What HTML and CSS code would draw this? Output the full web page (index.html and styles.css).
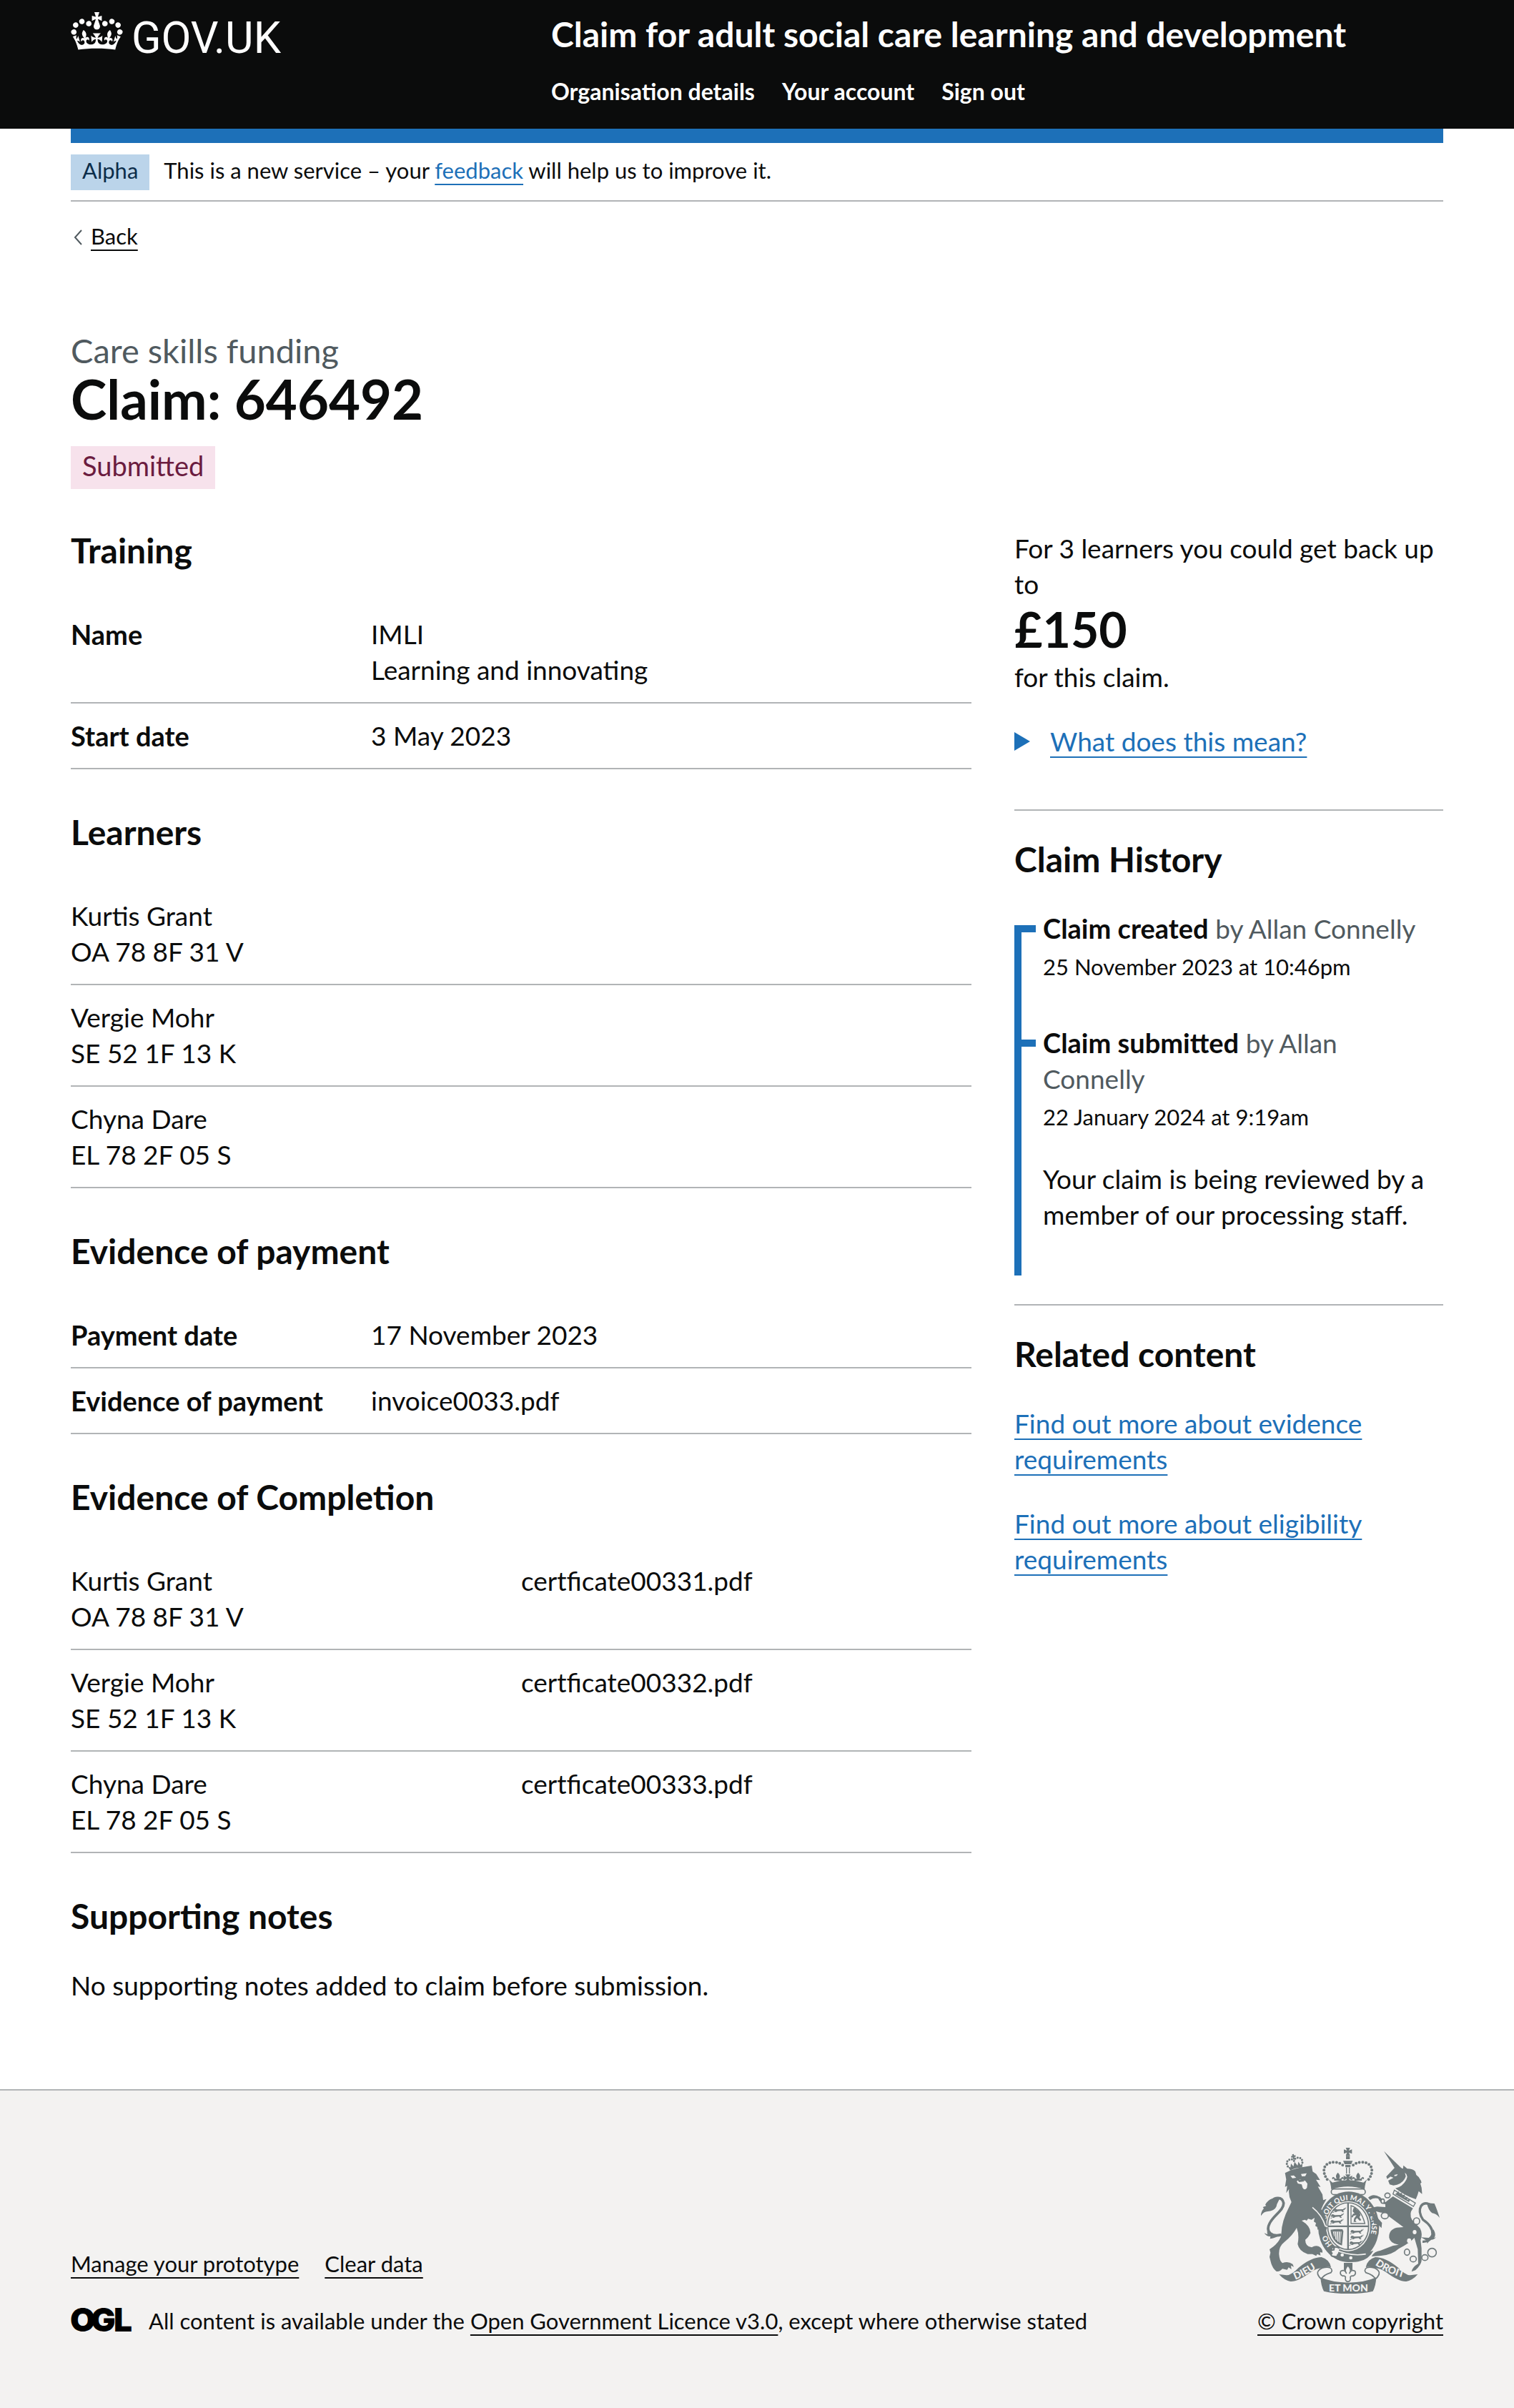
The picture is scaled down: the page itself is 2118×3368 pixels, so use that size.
FILE: index.html
```html
<!DOCTYPE html>
<html lang="en">
<head>
<meta charset="utf-8">
<meta name="viewport" content="width=device-width, initial-scale=1">
<title>Claim: 646492 – Claim for adult social care learning and development</title>
<link rel="stylesheet" href="styles.css">
</head>
<body>
<header class="header">
  <div class="container header-inner">
    <a class="logo" href="#">
      <svg class="logo-crown" viewBox="0 0 132 97" aria-hidden="true"><path fill="currentColor" fill-rule="evenodd" d="M25 30.2c3.5 1.5 7.7-.2 9.1-3.7 1.5-3.6-.2-7.8-3.9-9.2-3.6-1.4-7.6.3-9.1 3.9-1.4 3.5.3 7.5 3.9 9zM9 39.5c3.6 1.5 7.8-.2 9.2-3.7 1.5-3.6-.2-7.8-3.9-9.1-3.6-1.5-7.6.2-9.1 3.8-1.4 3.5.3 7.5 3.8 9zM4.4 57.2c3.5 1.5 7.7-.2 9.1-3.8 1.5-3.6-.2-7.7-3.9-9.1-3.5-1.5-7.6.3-9.1 3.8-1.4 3.5.3 7.6 3.9 9.1zm38.3-21.4c3.5 1.5 7.7-.2 9.1-3.8 1.5-3.6-.2-7.7-3.9-9.1-3.6-1.5-7.6.3-9.1 3.8-1.3 3.6.4 7.7 3.9 9.1zm64.4-5.6c-3.6 1.5-7.8-.2-9.1-3.7-1.5-3.6.2-7.8 3.8-9.2 3.6-1.4 7.7.3 9.2 3.9 1.3 3.5-.4 7.5-3.9 9zm15.9 9.3c-3.6 1.5-7.7-.2-9.1-3.7-1.5-3.6.2-7.8 3.7-9.1 3.6-1.5 7.7.2 9.2 3.8 1.5 3.5-.3 7.5-3.8 9zm4.7 17.7c-3.6 1.5-7.8-.2-9.2-3.8-1.5-3.6.2-7.7 3.9-9.1 3.6-1.5 7.7.3 9.2 3.8 1.3 3.5-.4 7.6-3.9 9.1zM89.3 35.8c-3.6 1.5-7.8-.2-9.2-3.8-1.4-3.6.2-7.7 3.9-9.1 3.6-1.5 7.7.3 9.2 3.8 1.4 3.6-.3 7.7-3.9 9.1zM69.7 17.7l8.9 4.7V9.3l-8.9 2.8c-.2-.3-.5-.6-.9-.9L72.4 0H59.6l3.5 11.2c-.3.3-.6.5-.9.9l-8.8-2.8v13.1l8.8-4.7c.3.3.6.7.9.9l-5 15.4v.1c-.2.8-.4 1.6-.4 2.4 0 4.1 3.1 7.5 7 8.1h.2c.3 0 .7.1 1 .1.4 0 .7 0 1-.1h.2c4-.6 7.1-4.1 7.1-8.1 0-.8-.1-1.7-.4-2.4V34l-5.1-15.4c.4-.2.7-.6 1-.9zM66 92.8c16.9 0 32.8 1.1 47.1 3.2 4-16.9 8.9-26.7 14-33.5l-9.6-3.4c1 4.9 1.1 7.2 0 10.2-1.5-1.4-3-4.3-4.2-8.7L108.6 76c2.8-2 5-3.2 7.5-3.3-4.4 9.4-10 11.9-13.6 11.2-4.3-.8-6.3-4.6-5.6-7.9 1-4.7 5.7-5.9 8-.5 4.3-8.7-3-11.4-7.6-8.8 7.1-7.2 7.9-13.5 2.1-21.1-8 6.1-8.1 12.3-4.5 20.8-4.7-5.4-12.1-2.5-9.5 6.2 3.4-5.2 7.9-2 7.2 3.1-.6 4.3-6.4 7.8-13.5 7.2-10.3-.9-10.9-8-11.2-13.8 2.5-.5 7.1 1.8 11 7.3L80.2 60c-4.1 4.4-8 5.3-12.3 5.4 1.4-4.4 8-11.6 8-11.6H55.5s6.4 7.2 7.9 11.6c-4.2-.1-8-1-12.3-5.4l1.4 16.4c3.9-5.5 8.5-7.7 10.9-7.3-.3 5.8-.9 12.8-11.1 13.8-7.2.6-12.9-2.9-13.5-7.2-.7-5 3.8-8.3 7.1-3.1 2.7-8.7-4.6-11.6-9.4-6.2 3.7-8.5 3.6-14.7-4.6-20.8-5.8 7.6-5 13.9 2.2 21.1-4.7-2.6-11.9.1-7.7 8.8 2.3-5.5 7.1-4.2 8.1.5.7 3.3-1.3 7.1-5.7 7.9-3.5.7-9-1.8-13.5-11.2 2.5.1 4.7 1.3 7.5 3.3l-4.7-15.4c-1.2 4.4-2.7 7.2-4.3 8.7-1.1-3-.9-5.3 0-10.2l-9.5 3.4c5 6.9 9.9 16.7 14 33.5 14.8-2.1 30.8-3.2 47.7-3.2z"/></svg>
      <span class="logo-text">GOV.UK</span>
    </a>
    <div class="header-content">
      <a class="service-name" href="#">Claim for adult social care learning and development</a>
      <nav class="header-nav" aria-label="Menu">
        <a href="#">Organisation details</a>
        <a href="#">Your account</a>
        <a href="#">Sign out</a>
      </nav>
    </div>
  </div>
</header>

<div class="container">
  <div class="phase-banner">
    <strong class="tag tag-phase">Alpha</strong>
    <span class="phase-text">This is a new service – your <a class="link" href="#">feedback</a> will help us to improve it.</span>
  </div>
  <a class="back" href="#">
    <svg class="back-arrow" viewBox="0 0 12 22" aria-hidden="true"><path d="M11 1 2 11l9 10" fill="none" stroke="#505a5f" stroke-width="2"/></svg>
    <span class="back-text">Back</span>
  </a>

  <main>
    <span class="caption">Care skills funding</span>
    <h1>Claim: 646492</h1>
    <strong class="tag tag-status">Submitted</strong>

    <div class="columns">
      <div class="details-column">
        <h2>Training</h2>
        <dl class="summary">
          <div class="summary-row"><dt>Name</dt><dd>IMLI<br>Learning and innovating</dd></div>
          <div class="summary-row"><dt>Start date</dt><dd>3 May 2023</dd></div>
        </dl>

        <h2 id="learners">Learners</h2>
        <table class="table" aria-labelledby="learners">
          <tbody>
            <tr><td>Kurtis Grant<br>OA 78 8F 31 V</td></tr>
            <tr><td>Vergie Mohr<br>SE 52 1F 13 K</td></tr>
            <tr><td>Chyna Dare<br>EL 78 2F 05 S</td></tr>
          </tbody>
        </table>

        <h2>Evidence of payment</h2>
        <dl class="summary">
          <div class="summary-row"><dt>Payment date</dt><dd>17 November 2023</dd></div>
          <div class="summary-row"><dt>Evidence of payment</dt><dd>invoice0033.pdf</dd></div>
        </dl>

        <h2 id="completion">Evidence of Completion</h2>
        <table class="table" aria-labelledby="completion">
          <tbody>
            <tr><td>Kurtis Grant<br>OA 78 8F 31 V</td><td>certficate00331.pdf</td></tr>
            <tr><td>Vergie Mohr<br>SE 52 1F 13 K</td><td>certficate00332.pdf</td></tr>
            <tr><td>Chyna Dare<br>EL 78 2F 05 S</td><td>certficate00333.pdf</td></tr>
          </tbody>
        </table>

        <h2>Supporting notes</h2>
        <p>No supporting notes added to claim before submission.</p>
      </div>

      <aside class="side-column">
        <p class="amount-text">For 3 learners you could get back up to <strong class="amount">£150</strong> for this claim.</p>
        <details class="help">
          <summary><span class="link">What does this mean?</span></summary>
        </details>
        <section class="side-section">
          <h2>Claim History</h2>
          <ol class="timeline">
            <li>
              <p><strong>Claim created</strong> <span class="byline">by Allan Connelly</span></p>
              <p class="timeline-date">25 November 2023 at 10:46pm</p>
            </li>
            <li>
              <p><strong>Claim submitted</strong> <span class="byline">by Allan Connelly</span></p>
              <p class="timeline-date">22 January 2024 at 9:19am</p>
              <p class="timeline-note">Your claim is being reviewed by a member of our processing staff.</p>
            </li>
          </ol>
        </section>
        <section class="side-section">
          <h2>Related content</h2>
          <ul class="related">
            <li><a class="link" href="#">Find out more about evidence requirements</a></li>
            <li><a class="link" href="#">Find out more about eligibility requirements</a></li>
          </ul>
        </section>
      </aside>
    </div>
  </main>
</div>

<footer class="footer">
  <div class="container footer-inner">
    <div>
      <nav class="footer-links" aria-label="Support links">
        <a href="#">Manage your prototype</a>
        <a href="#">Clear data</a>
      </nav>
      <div class="licence">
        <svg class="ogl" viewBox="0 0 83 34" role="img" aria-label="Open Government Licence"><text y="33"><tspan x="-1">O</tspan><tspan x="28">G</tspan><tspan x="60">L</tspan></text></svg>
        <span>All content is available under the <a href="#">Open Government Licence v3.0</a>, except where otherwise stated</span>
      </div>
    </div>
    <a class="copyright" href="#">
      <svg class="crest" viewBox="72 72 750 612" aria-hidden="true">
        <defs>
          <path id="garter" d="M371 479A97 110 0 1 1 500 488"/>
          <path id="motto-left" d="M216 626Q270 606 326 562"/>
          <path id="motto-right" d="M551 563Q600 600 680 620"/>
          <g id="small-lion"><path d="M2 12q3-10 10-6l6 3 22-1q8 0 8-7 5 4 1 10l-6 3 5 6h-7l-5-5-15 1-7 4-7-1 4-5-7 3z"/><path d="M46 9q10-2 9-8M6 20l-6 2" fill="none" stroke="#707a7c" stroke-width="3"/></g>
          <g id="fleur"><path d="M0-20q-14 14-5 26h-6q-9-14-14-2 3 8 7 1 4 2 2 9H16q-2-7 2-9 4 7 7-1-5-12-14 2H5q9-12-5-26z"/></g>
        </defs>
        <g fill="#707a7c">
          <!-- imperial crown -->
          <path d="M428 72h18l-5 12 13-5v18l-13-5 5 13h-18l5-13-13 5V79l13 5zM429 106h16v14h-16zM417 127h40l-6 14h-28zM426 144h22v10h-22z"/>
          <path d="M431 155v26M443 155v26" stroke="#707a7c" stroke-width="4"/>
          <g fill="none" stroke="#707a7c" stroke-width="12" stroke-linecap="round" stroke-dasharray="0 14"><path d="M350 205C325 170 335 133 378 133C400 133 412 140 420 150"/><path d="M524 205C549 170 539 133 496 133C474 133 462 140 454 150"/></g>
          <use href="#fleur" x="395" y="196"/><use href="#fleur" x="480" y="196"/>
          <path d="M426 184h22l-7 12 14-7v20l-14-7 7 14h-22l7-14-14 7v-20l14 7z"/>
          <path d="M356 204l16 14q65-20 130 0l16-14q-9 14-11 43-70-24-140 0-2-29-11-43z"/>
          <rect x="367" y="245" width="143" height="24" rx="12" fill="#f3f2f1" stroke="#707a7c" stroke-width="5"/>
          <!-- garter and shield -->
          <ellipse cx="440" cy="404" rx="128" ry="148"/>
          <ellipse cx="438" cy="401" rx="93" ry="105" fill="#f3f2f1"/>
          <ellipse cx="438" cy="401" rx="86" ry="98" fill="none" stroke="#707a7c" stroke-width="5"/>
          <path d="M434 303h7v196h-7zM352 398h172v7H352z"/>
          <use href="#small-lion" x="373" y="322"/><use href="#small-lion" x="364" y="346"/><use href="#small-lion" x="362" y="370"/>
          <use href="#small-lion" x="446" y="412"/><use href="#small-lion" x="446" y="436"/><use href="#small-lion" x="442" y="460"/>
          <path d="M450 390v-75q42 12 58 75z" fill="none" stroke="#707a7c" stroke-width="4"/>
          <path d="M460 326l8-5 4 9 12 8 6 17-5 8 8 12-6 4-12-12-7 9 5 7h-12l2-14 10-14-12 2-5 8-5-4 8-12 6-1-8-9z"/>
          <path d="M364 416q22-4 50-2l4 8-6 60q-42-12-48-66zm10 8q6 38 32 48l4-48z" fill-rule="evenodd"/>
          <path d="M381 425l2 28M389 424l2 38M397 424l2 44M405 423v46" stroke="#707a7c" stroke-width="3"/>
          <g class="crest-text crest-garter"><text><textPath href="#garter">HO</textPath></text><text><textPath href="#garter" startOffset="114">SOIT QUI MAL Y PENSE</textPath></text></g>
          <path d="M372 500q75 40 172 3-18 38-64 47-62 8-106-25z"/>
          <path d="M372 496q75 34 140 22" fill="none" stroke="#f3f2f1" stroke-width="5"/>
          <circle cx="413" cy="522" r="7" fill="#f3f2f1"/><circle cx="449" cy="534" r="7" fill="#f3f2f1"/>
          <path d="M402 494q-24-14-24 6-20 2-8 14-10 14 10 14 14 4 14-10" fill="#f3f2f1" stroke="#707a7c" stroke-width="6"/>
          <!-- lion -->
          <path d="M173 178L200 165 235 155 285 147 289 172 304 182 320 208 303 206 322 236 311 235 330 268 333 292 347 287 333 312 325 330 340 352 350 408 342 424 333 416 326 422 320 412 310 416 308 404 300 400 303 388 294 382 297 366 284 374 270 370 264 378 256 374 243 378Q280 400 280 430 270 450 258 458 258 486 285 490 300 480 315 486 332 496 330 512L320 510 322 524 308 518 304 526 288 518 268 518Q232 506 226 476 234 440 222 408 205 440 170 468 146 486 148 520 150 548 162 556 185 546 205 560L210 572 198 566 200 582 188 574 182 584 162 580Q150 594 136 590 118 576 112 546L108 530 112 512 108 498 122 488Q145 472 156 445 158 430 160 405 164 380 176 350L200 300Q186 272 190 245L178 262 182 232 173 236 178 205Z"/>
          <path d="M196 190l14-2 10 10-16 2zM240 182l24-3-6 12-14 1zM222 212l14-7 22 6 9 12-2 17q-10 14-18 0l-4-14-16-4z" fill="#f3f2f1"/>
          <path d="M226 208l22-5 6 10-22 3z"/>
          <path d="M288 322q40 32 54 78l10 4" fill="none" stroke="#f3f2f1" stroke-width="5"/>
          <path d="M158 437C118 448 90 425 108 390 124 355 168 335 167 304 162 276 128 276 112 302" fill="none" stroke="#707a7c" stroke-width="11"/>
          <path d="M152 283q-44-6-62 28l4 5-14 5 4 6q-10 8-13 32 12-20 30-20 36-4 38-30zM100 415q-4 12 0 21l-14-6q10 16 26 14l-2 10q26-2 46-22l-22 4q-32-2-34-21z"/>
          <g transform="rotate(-13 215 140)"><path d="M183 143q-6-22 14-26 12-2 17 10 6-12 18-10 20 4 14 26" fill="none" stroke="#707a7c" stroke-width="9" stroke-linecap="round" stroke-dasharray="0 11"/><path d="M212 98h7v6h6v7h-6v10h-7v-10h-6v-7h6zM184 144l9 6 6-16 7 15 9-18 9 18 7-15 6 16 9-6-5 18q-26-7-52 0z"/></g>
          <!-- unicorn -->
          <path d="M588 86l76 74-24 8z"/>
          <path d="M668 160l2-14 16 14q24 0 34 12l4 14q16 10 22 32l-5 4q8 20 7 44l-14-12q-4 16-12 34-44-14-86-46 30-6 46-36 10-18-6-30l4 16q-12 34-52 38l-16-4-6-16 22-12-12-5-14 10-4-10 40-42z"/>
          <path d="M632 186l14-3-4 7-10 1z" fill="#f3f2f1"/>
          <path d="M632 250l88 54-8 14-86-52z" fill="#f3f2f1" stroke="#707a7c" stroke-width="4"/>
          <path d="M642 262l8-8 2 12 12-6-1 13 13-5-2 14 13-4-2 12 14-3-6 13-58-33z"/>
          <path d="M626 276l84 50q-18 22-4 48l34 36q12 24 2 50l4 34v52q-2 18-26 40l-16 6q2-18 28-34l-2-60-14-48q-20 22-66 46-28 26-74 29l-40 3q12-22 38-25l52-20 24-4q-36-6-40-30-2-34 32-42l28-2-62-46-8-14q-24 2-44-6-12 4-10 10l34 38-2 22-14-14-18-6-2-20-18-30q8-18 34-20l34 2v-12q-20-2-30-24-18-4-34 6l-8-10q20-20 50-2l22 22z"/>
          <path d="M750 466q34 2 42-30 2-34-40-62-22-34-8-58 18-22 48 2" fill="none" stroke="#707a7c" stroke-width="10"/>
          <path d="M768 304l32 2q10 22 22 60-14-18-32-20-16-12-22-42zM796 414q14 26 2 36l8-2q-8 12-24 10l-12 16-2-12-24-14 32 2q16-12 20-36z"/>
          <g fill="#f3f2f1" stroke="#707a7c" stroke-width="5"><ellipse cx="603" cy="272" rx="11" ry="10"/><ellipse cx="592" cy="357" rx="15" ry="13"/><ellipse cx="583" cy="296" rx="7" ry="9"/><ellipse cx="725" cy="380" rx="13" ry="14"/><ellipse cx="685" cy="510" rx="11" ry="13"/><ellipse cx="711" cy="539" rx="13" ry="12"/><ellipse cx="760" cy="533" rx="13" ry="12"/><circle cx="790" cy="512" r="18"/></g>
          <ellipse cx="717" cy="426" rx="8" ry="9" fill="#f3f2f1"/><ellipse cx="694" cy="462" rx="9" ry="10" fill="#f3f2f1"/>
          <!-- ribbon -->
          <path d="M148 603l32 4q22-2 50-32 54-44 96-44 34 10 40 42-20-4-34 4-24-2-52 18-54 40-84 38-28-6-48-30z"/>
          <path d="M730 603l-32 4q-22-2-50-32-54-44-96-44-34 10-40 42 20-4 34 4 24-2 52 18 54 40 84 38 28-6 48-30z"/>
          <path d="M340 574q28-4 30 14l-4 8q-34 10-40 28-18-16-16-30 6-16 30-20zM538 574q-28-4-30 14l4 8q34 10 40 28 18-16 16-30-6-16-30-20z" fill="#f3f2f1" stroke="#707a7c" stroke-width="5"/>
          <path d="M322 616q50 22 117 22t117-22q-2 36-14 58-40 10-103 10t-103-10q-12-22-14-58z"/>
          <path d="M420 555h36v30h-36z"/>
          <path d="M437 566q-18 18-6 34-8-20-24-10-6 14 8 20 8-2 12 4-4 18 10 20 14-2 10-20 4-6 12-4 14-6 8-20-16-10-24 10 12-16-6-34z" fill="#f3f2f1" stroke="#707a7c" stroke-width="5"/>
          <g class="crest-text"><text><textPath href="#motto-left">DIEU</textPath></text><text><textPath href="#motto-right">DROIT</textPath></text><text x="439" y="675" text-anchor="middle">ET MON</text></g>
        </g>
      </svg>
      <span class="copyright-text">© Crown copyright</span>
    </a>
  </div>
</footer>
</body>
</html>
```
FILE: styles.css
```css
* {
  box-sizing: border-box;
}

body {
  margin: 0;
  background: #fff;
  color: #0b0c0c;
  font-family: Lato, "Liberation Sans", sans-serif;
  font-size: 37px;
  line-height: 50px;
}

a {
  color: inherit;
  text-decoration-thickness: 2px;
  text-underline-offset: 7px;
  text-decoration-skip-ink: none;
}

p,
dl,
dd,
ol,
ul {
  margin: 0;
  padding: 0;
}

ol,
ul {
  list-style: none;
}

.container {
  width: min(1920px, 100% - 60px);
  margin: 0 auto;
}

.link {
  color: #1d70b8;
  text-decoration: underline 2px;
  text-underline-offset: 7px;
  text-decoration-skip-ink: none;
}

/* Header */
.header {
  background: #0b0c0c;
  color: #fff;
}

.header-inner {
  display: grid;
  grid-template-columns: 35% 1fr;
}

.header a {
  text-decoration: none;
}

.logo {
  display: flex;
  gap: 12px;
  padding-top: 17px;
}

.logo-crown {
  width: 73px;
  height: 53px;
}

.logo-text {
  margin-top: 6px;
  font: 400 61px/60px Roboto, sans-serif;
}

.header-content {
  padding: 20px 0 34px;
}

.service-name {
  display: block;
  margin-bottom: 34px;
  font-size: 48px;
  font-weight: 700;
  line-height: 56px;
}

.header-nav {
  display: flex;
  flex-wrap: wrap;
  gap: 38px;
  font-size: 32px;
  font-weight: 700;
  line-height: 36px;
}

/* Phase banner and back link */
.phase-banner {
  display: flex;
  gap: 20px;
  padding: 16px 0 14px;
  border-top: 20px solid #1d70b8;
  border-bottom: 2px solid #b1b4b6;
  font-size: 31px;
  line-height: 36px;
}

.phase-text {
  padding-top: 4px;
}

.tag {
  font-weight: 400;
  padding: 4px 16px 10px;
}

.tag-phase {
  background: #bbd4ea;
  color: #0c2d4a;
}

.tag-status {
  display: inline-block;
  margin-top: 22px;
  background: #f7e2ec;
  color: #6b1c40;
  font-size: 38px;
  line-height: 46px;
}

.back {
  display: inline-flex;
  gap: 12px;
  margin: 30px 0 114px;
  padding-left: 4px;
  font-size: 31px;
  line-height: 36px;
  text-decoration: none;
}

.back-arrow {
  width: 12px;
  height: 22px;
  margin-top: 9px;
}

.back-text {
  text-decoration: underline 2px;
}

/* Page title */
.caption {
  display: block;
  padding-bottom: 4px;
  color: #505a5f;
  font-size: 47px;
  line-height: 56px;
}

h1 {
  margin: 0;
  padding-bottom: 8px;
  font-size: 76px;
  line-height: 72px;
}

main {
  padding-bottom: 120px;
}

.columns {
  display: grid;
  grid-template-columns: minmax(0, 21fr) minmax(0, 10fr);
  gap: 60px;
  margin-top: 58px;
}

h2 {
  margin: 0 0 40px;
  padding-bottom: 4px;
  font-size: 48px;
  line-height: 56px;
}

/* Claim details */
.summary,
.table {
  margin-bottom: 60px;
}

.summary-row {
  display: grid;
  grid-template-columns: 1fr 2fr;
  padding: 20px 0;
  border-bottom: 2px solid #b1b4b6;
}

dt {
  font-size: 38px;
  font-weight: 700;
}

.table {
  width: 100%;
  table-layout: fixed;
  border-spacing: 0;
}

.table td {
  padding: 20px 0;
  border-bottom: 2px solid #b1b4b6;
  vertical-align: top;
}

/* Side column */
.amount {
  display: block;
  padding-bottom: 4px;
  font-size: 68px;
  line-height: 76px;
}

.help {
  margin: 40px 0 70px;
}

.help summary {
  display: flex;
  gap: 28px;
  color: #1d70b8;
}

.help summary::before {
  content: "";
  width: 22px;
  height: 26px;
  margin-top: 12px;
  background: #1d70b8;
  clip-path: polygon(0 0, 100% 50%, 0 100%);
}

.side-section {
  margin-bottom: 40px;
  padding-top: 40px;
  border-top: 2px solid #b1b4b6;
}

.timeline {
  position: relative;
}

.timeline::before {
  content: "";
  position: absolute;
  top: 20px;
  bottom: 0;
  left: 0;
  width: 10px;
  background: #1d70b8;
}

.timeline li {
  position: relative;
  padding: 0 20px 60px 40px;
}

.timeline li::before {
  content: "";
  position: absolute;
  top: 20px;
  left: 0;
  width: 30px;
  height: 10px;
  background: #1d70b8;
}

.timeline strong {
  font-size: 38px;
  line-height: 46px;
}

.byline {
  color: #505a5f;
}

.timeline-date {
  padding: 10px 0 4px;
  font-size: 31px;
  line-height: 36px;
}

.timeline-note {
  margin-top: 40px;
}

.related {
  display: grid;
  gap: 40px;
}

/* Footer */
.footer {
  padding: 80px 0 100px;
  border-top: 2px solid #b1b4b6;
  background: #f3f2f1;
  font-size: 31px;
  line-height: 36px;
}

.footer-inner {
  display: flex;
  justify-content: space-between;
  align-items: flex-end;
  gap: 60px;
}

.footer-links {
  display: flex;
  gap: 36px;
  margin-bottom: 44px;
}

.licence {
  display: flex;
  gap: 26px;
  padding-bottom: 4px;
}

.ogl {
  width: 83px;
  height: 34px;
  overflow: visible;
  font: 900 46px Inter, sans-serif;
}

.copyright {
  display: grid;
  justify-items: end;
  gap: 20px;
  padding-bottom: 4px;
  text-decoration: none;
}

.copyright-text {
  text-decoration: underline 2px;
}

.crest {
  width: 250px;
  height: 204px;
  margin-right: 5px;
}

.crest-text {
  fill: #f3f2f1;
  font: 900 42px Lato, sans-serif;
}

.crest-garter {
  font-size: 30px;
}
```
